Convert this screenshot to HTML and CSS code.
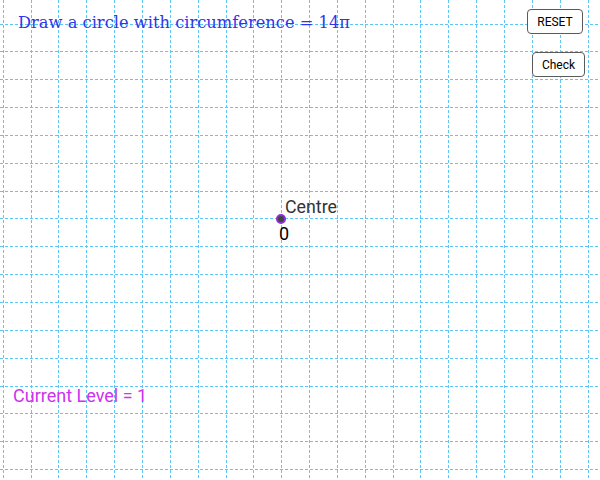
FILE: index.html
```html
<!DOCTYPE html>
<html>
<head>
<meta charset="utf-8">
<link rel="stylesheet" href="styles.css">
</head>
<body>
<div class="applet">
  <svg class="grid" width="600" height="480" viewBox="0 0 600 480">
    <g id="v" class="lines"></g>
    <g id="h" class="lines"></g>
  </svg>
  <div class="title">Draw a circle with circumference = 14π</div>
  <button class="btn reset">RESET</button>
  <button class="btn check">Check</button>
  <div class="label-centre">Centre</div>
  <div class="point"></div>
  <div class="label-zero">0</div>
  <div class="level">Current Level = 1</div>
</div>
<script src="script.js"></script>
</body>
</html>
```
FILE: script.js
```js
(function(){
  var ns = "http://www.w3.org/2000/svg";
  var step = 27.85;
  var v = document.getElementById("v");
  var h = document.getElementById("h");
  for (var k = 0; k < 23; k++) {
    var x = Math.round(2.7 + step * k) + 0.5;
    if (x > 600) break;
    var l = document.createElementNS(ns, "line");
    l.setAttribute("x1", x); l.setAttribute("x2", x);
    l.setAttribute("y1", 0); l.setAttribute("y2", 480);
    v.appendChild(l);
  }
  for (var j = 0; j < 18; j++) {
    var y = Math.round(24.5 + step * j) - 0.5;
    if (y > 480) break;
    var m = document.createElementNS(ns, "line");
    m.setAttribute("x1", 0); m.setAttribute("x2", 600);
    m.setAttribute("y1", y); m.setAttribute("y2", y);
    h.appendChild(m);
  }
})();
```
FILE: styles.css
```css
html, body {
  margin: 0;
  padding: 0;
  background: #ffffff;
}
.applet {
  position: relative;
  width: 600px;
  height: 480px;
  overflow: hidden;
  background: #ffffff;
  font-family: Roboto, "Liberation Sans", sans-serif;
}
.grid {
  position: absolute;
  left: 0;
  top: 0;
}
.lines line {
  stroke: #5cc6f6;
  stroke-width: 1;
  stroke-dasharray: 3 2;
}
.title {
  position: absolute;
  left: 18px;
  top: 13px;
  font-family: "DejaVu Serif", serif;
  font-size: 16.3px;
  color: #3333ea;
  white-space: nowrap;
}
.btn {
  position: absolute;
  box-sizing: border-box;
  background: #ffffff;
  border: 1.5px solid #5a5a5a;
  border-radius: 4px;
  font-family: Roboto, "Liberation Sans", sans-serif;
  font-size: 12px;
  color: #000000;
  padding: 0;
}
.reset {
  left: 527px;
  top: 9px;
  width: 56px;
  height: 25px;
}
.check {
  left: 532px;
  top: 52px;
  width: 53px;
  height: 25px;
}
.label-centre {
  position: absolute;
  left: 285px;
  top: 196px;
  font-size: 17.8px;
  color: #333333;
}
.label-zero {
  position: absolute;
  left: 279px;
  top: 223px;
  font-size: 18px;
  color: #000000;
}
.point {
  position: absolute;
  left: 276px;
  top: 214px;
  width: 6px;
  height: 6px;
  border-radius: 50%;
  background: #444444;
  border: 2px solid #8b2fd6;
}
.level {
  position: absolute;
  left: 13px;
  top: 385px;
  font-size: 18px;
  color: #cc33ee;
  white-space: nowrap;
}
```
